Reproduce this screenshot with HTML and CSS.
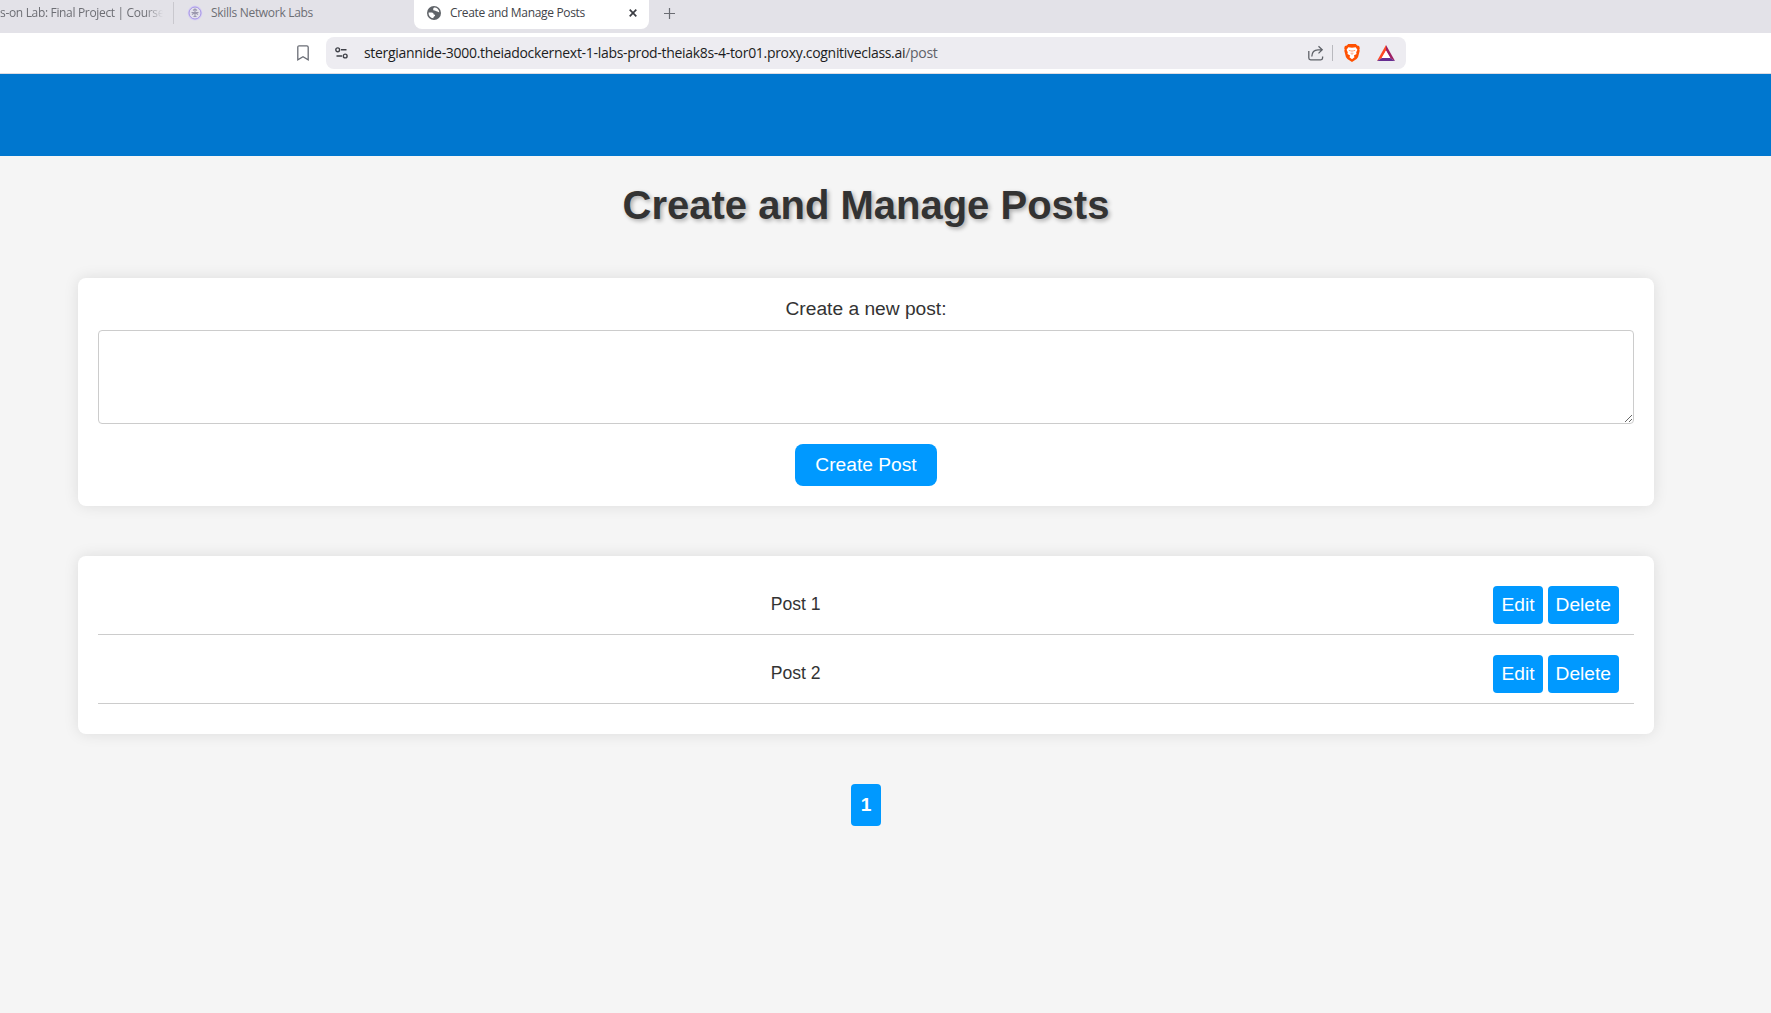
FILE: index.html
```html
<!DOCTYPE html>
<html lang="en">
<head>
<meta charset="utf-8">
<title>Create and Manage Posts</title>
<link rel="stylesheet" href="styles.css">
</head>
<body>
<div class="tabs">
  <div class="tab tab-first"><span class="tab-text fade">s-on Lab: Final Project | Course</span></div>
  <div class="tab tab-labs">
    <svg class="tab-icon" width="16" height="16" viewBox="0 0 16 16" fill="none"><circle cx="8" cy="8" r="7.4" fill="#d9d1f3"/><circle cx="8" cy="8" r="6" fill="#e3e1ec" stroke="#a493e6" stroke-width="1"/><path d="M8 5v7M4.500 7.500h7M5 9.500l3-2 3 2M6 5.500l2-1.500 2 1.500M6.500 11.500h3" stroke="#9c98ae" stroke-width="1.1"/></svg>
    <span class="tab-text labs-text">Skills Network Labs</span>
  </div>
  <div class="tab tab-active">
    <svg class="tab-icon" width="14" height="14" viewBox="0 0 14 14"><circle cx="7" cy="7" r="7" fill="#5f6368"/><path d="M7.2 1.6C9.7 1.5 12 3.5 12.3 6.2 11 6.4 10.8 5.4 9.6 5.3 8.800 5.300 8.700 4.400 7.600 4.500 6.500 4.600 6 3.800 6.200 2.900 6.300 2.300 6.600 1.800 7.200 1.600ZM1.600 6.400 4.600 6.600C5.900 6.700 6.700 7.500 6.700 8.500 7.900 8.500 8.300 9.200 8 10.100 7.200 10.400 6.500 10.900 6.300 12.200 3.400 11.900 1.400 9.400 1.600 6.400Z" fill="#fff"/></svg>
    <span class="tab-text active-text">Create and Manage Posts</span>
    <svg class="tab-close" width="8" height="8" viewBox="0 0 8 8"><path d="M.7.7l6.600 6.600M7.300.7L.7 7.300" stroke="#3b3d43" stroke-width="1.700"/></svg>
  </div>
  <svg class="new-tab" width="11" height="11" viewBox="0 0 11 11"><path d="M5.500 0v11M0 5.500h11" stroke="#6a6c72" stroke-width="1.200"/></svg>
</div>
<div class="toolbar">
  <svg class="bookmark" width="12" height="16" viewBox="0 0 12 16"><path d="M.8 2.200Q.8.8 2.200.8h7.600q1.400 0 1.400 1.400v12.600L6 11.800.8 14.800Z" fill="none" stroke="#6a6d75" stroke-width="1.300"/></svg>
  <div class="address">
    <svg class="tune" width="13" height="12" viewBox="0 0 13 12" fill="none" stroke="#3f4148" stroke-width="1.400"><circle cx="2.700" cy="2.800" r="1.900"/><path d="M6 2.800h5.500M1.500 9H7"/><circle cx="10.200" cy="9" r="1.900"/></svg>
    <span class="url">stergiannide-3000.theiadockernext-1-labs-prod-theiak8s-4-tor01.proxy.cognitiveclass.ai<span class="path">/post</span></span>
    <svg class="share" width="16" height="16" viewBox="0 0 16 16" fill="none" stroke="#5f6269" stroke-width="1.300"><path d="M.8 6v7q0 1.800 1.800 1.800h10.200q1.800 0 1.800-1.800v-1.500M3.800 11.500C4 7.300 6.500 4.800 10 4.800h4M10.500 1.200l3.700 3.600-3.700 3.600"/></svg>
    <span class="divider"></span>
    <svg class="shield" width="16" height="18" viewBox="0 0 16 18"><path d="M4.200 0h7.600l1.400 1.600 1.900.4.700 2.200-.5 1.300.4 1.200-1.600 6.300-1.500 2L8 18l-4.600-3-1.500-2L.3 6.700l.4-1.200-.5-1.300L.9 2l1.900-.4Z" fill="#ff5000"/><path d="M4.300 3.200 8 3.700l3.700-.5 1.700 2.500-1.200 2.600.3 1.700-2.600 1.600.6 1.700L8 15.200l-2.500-1.900.6-1.700L3.500 10l.3-1.700-1.200-2.600Z" fill="#fff"/><path d="M4.800 6.400l2 .5M11.200 6.400l-2 .5M8 6v2.500M6.600 9.300l1.400.9 1.400-.9" stroke="#ff7a40" stroke-width=".8" fill="none"/></svg>
    <svg class="triangle" width="18" height="16" viewBox="0 0 18 16"><path d="M9 0 0 16l5-3L9 5.800Z" fill="#ff4724"/><path d="M9 0v5.800l4 7.200 5 3Z" fill="#9e1f63"/><path d="M0 16l5-3h8l5 3Z" fill="#662d91"/><path d="M9 5.500 4.600 13h8.800Z" fill="#fff"/></svg>
  </div>
</div>
<header class="banner"></header>
<main class="page">
  <h1>Create and Manage Posts</h1>
  <form class="card create">
    <label for="post">Create a new post:</label>
    <textarea id="post"></textarea>
    <button type="button" class="submit">Create Post</button>
  </form>
  <section class="card">
    <div class="post"><span class="post-text">Post 1</span><button class="action">Edit</button><button class="action">Delete</button></div>
    <div class="post"><span class="post-text">Post 2</span><button class="action">Edit</button><button class="action">Delete</button></div>
  </section>
  <nav class="pagination"><span class="page-number">1</span></nav>
</main>
</body>
</html>
```
FILE: styles.css
```css
* { box-sizing: border-box; }
body {
  margin: 0;
  height: 1013px;
  overflow: hidden;
  background: #f5f5f5;
  color: #333;
  font-family: Arial, "Liberation Sans", sans-serif;
}
svg { flex: none; }
.tabs {
  display: flex;
  height: 33px;
  background: #e3e2e8;
  font-family: "Segoe UI", "Open Sans", sans-serif;
  font-size: 12px;
  line-height: 16px;
  color: #6d6e74;
}
.tab { display: flex; align-items: center; height: 26px; flex: none; white-space: nowrap; }
.tab-text { flex: none; }
.tab-first { width: 174px; height: 22px; margin-top: 2px; border-right: 1px solid #c9c8ce; }
.fade {
  width: 163px;
  overflow: hidden;
  letter-spacing: -0.33px;
  mask-image: linear-gradient(to right, #000 145px, transparent 163px);
}
.tab-labs { width: 240px; padding-left: 13px; gap: 8px; }
.labs-text { letter-spacing: -0.3px; }
.tab-active {
  width: 235px;
  height: 29px;
  padding: 0 12px 3px 13px;
  border-radius: 0 0 8px 8px;
  background: #fff;
  color: #414349;
}
.active-text { margin-left: 9px; letter-spacing: -0.33px; }
.tab-close { margin-left: auto; }
.new-tab { margin: 8px 0 0 15px; }
.toolbar {
  display: flex;
  align-items: center;
  height: 41px;
  padding: 0 0 1px 297px;
  background: #fff;
  border-bottom: 1px solid #dddce3;
}
.address {
  display: flex;
  align-items: center;
  width: 1080px;
  height: 32px;
  margin-left: 17px;
  padding: 0 11px 0 9px;
  border-radius: 8px;
  background: #edecf1;
  font-family: "Segoe UI", "Open Sans", sans-serif;
  font-size: 14px;
  line-height: 20px;
  color: #1c1d22;
}
.url { margin-left: 16px; white-space: nowrap; letter-spacing: -0.305px; }
.path { color: #606168; }
.share { margin-left: auto; }
.divider { width: 1px; height: 16px; margin: 0 11px 0 8px; background: #b9b9be; }
.triangle { margin-left: 17px; }
.banner { height: 82px; background: #0077cf; }
.page { width: 1576px; margin-left: 78px; }
h1 {
  margin: 0;
  padding-top: 26px;
  height: 122px;
  font-size: 40px;
  line-height: 46px;
  text-align: center;
  text-shadow: 2px 2px 4px rgba(0, 0, 0, 0.3);
}
.card {
  margin-bottom: 50px;
  padding: 20px;
  border-radius: 8px;
  background: #fff;
  box-shadow: 0 0 15px rgba(0, 0, 0, 0.1);
}
.create { display: flex; flex-direction: column; align-items: center; height: 228px; }
label { font-size: 19.2px; line-height: 22px; margin-bottom: 10px; }
textarea {
  width: 100%;
  height: 94px;
  margin: 0 0 20px;
  padding: 10px;
  border: 1px solid #ccc;
  border-radius: 4px;
  resize: vertical;
}
button {
  border: 0;
  background: #09f;
  color: #fff;
  font: 19.2px/22px Arial, "Liberation Sans", sans-serif;
}
.submit { padding: 10px 20px; height: 42px; border-radius: 8px; }
.post {
  display: flex;
  align-items: center;
  height: 59px;
  padding: 10px;
  border-bottom: 1px solid #ccc;
}
.post + .post { margin: 10px 0; }
.post-text { flex: 1; margin-right: 5px; padding-bottom: 2px; font-size: 17.6px; text-align: center; }
.action { height: 38px; margin-left: 0; margin-right: 5px; padding: 8px; border-radius: 4px; }
.post-text + .action { margin-left: 5px; }
.pagination { display: flex; justify-content: center; }
.page-number {
  padding: 10px;
  border-radius: 4px;
  background: #09f;
  color: #fff;
  font-size: 19.2px;
  font-weight: bold;
  line-height: 22px;
}
```
